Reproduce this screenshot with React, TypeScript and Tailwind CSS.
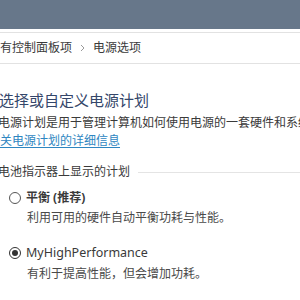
export default function App() {
  return (
    <div
      className="w-[300px] h-[300px] bg-white overflow-hidden flex flex-col text-[12px] text-[#3a3a3a]"
      style={{ fontFamily: '"Noto Sans", "Noto Sans CJK SC", sans-serif' }}
    >
      {/* Window title band */}
      <div className="h-[29px] shrink-0 bg-[#67778a]" />
      <div className="h-[3px] shrink-0 bg-white" />

      {/* Breadcrumb */}
      <div className="h-[32px] shrink-0 border-y border-[#e2e2e2] flex items-center whitespace-nowrap leading-none">
        <span className="ml-[-12px]">所有控制面板项</span>
        <svg width="5" height="8" viewBox="0 0 5 8" className="ml-[8px] mr-[8px]">
          <path d="M1 1l3 3-3 3" fill="none" stroke="#9a9a9a" strokeWidth="1" />
        </svg>
        <span>电源选项</span>
      </div>

      {/* Content */}
      <div className="flex flex-col ml-[-1px] whitespace-nowrap">
        <h1 className="mt-[26px] h-[20px] leading-[20px] text-[15px] font-normal text-[#34466a]">
          选择或自定义电源计划
        </h1>
        <p className="mt-[5px] h-[16px] leading-[16px] ml-[-1px]">
          电源计划是用于管理计算机如何使用电源的一套硬件和系统设置
        </p>
        <a className="mt-[2px] h-[16px] leading-[16px] ml-[-11px] text-[#2e86c1] underline underline-offset-2 self-start">
          有关电源计划的详细信息
        </a>

        <div className="mt-[15px] h-[16px] flex items-center gap-[8px] ml-[-1px]">
          <span className="leading-[16px]">电池指示器上显示的计划</span>
          <div className="flex-1 h-px bg-[#e4e4e4]" />
        </div>

        {/* Plan: balanced */}
        <div className="mt-[10px] h-[16px] flex items-center ml-[10px]">
          <span className="w-[12px] h-[12px] rounded-full border border-[#555] bg-white shrink-0" />
          <span className="ml-[5px] font-bold leading-[16px]">平衡 (推荐)</span>
        </div>
        <p className="mt-[4px] h-[16px] leading-[16px] ml-[28px] text-[#4a4a4a]">
          利用可用的硬件自动平衡功耗与性能。
        </p>

        {/* Plan: custom high performance */}
        <div className="mt-[19px] h-[16px] flex items-center ml-[10px]">
          <span className="w-[12px] h-[12px] rounded-full border-[1.5px] border-[#333] bg-white shrink-0 flex items-center justify-center">
            <span className="w-[6px] h-[6px] rounded-full bg-[#333]" />
          </span>
          <span className="ml-[5px] leading-[16px] text-[12.5px]">MyHighPerformance</span>
        </div>
        <p className="mt-[5px] h-[16px] leading-[16px] ml-[28px] text-[#4a4a4a]">
          有利于提高性能，但会增加功耗。
        </p>
      </div>
    </div>
  );
}
